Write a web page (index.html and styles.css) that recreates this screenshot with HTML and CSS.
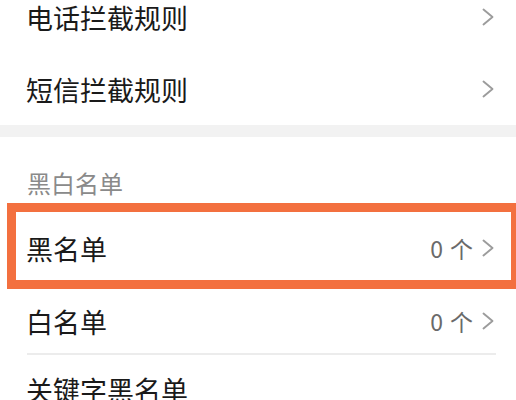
FILE: index.html
```html
<!DOCTYPE html>
<html lang="zh-CN">
<head>
<meta charset="utf-8">
<title>骚扰拦截设置</title>
<link rel="stylesheet" href="styles.css">
</head>
<body>
<div class="page">
  <section class="group group-top">
    <div class="row">
      <span class="label">电话拦截规则</span>
      <span class="trail">
        <svg class="chev" viewBox="0 0 12 18" width="12" height="18"><path d="M1.5 1.5 L10.5 9 L1.5 16.5" /></svg>
      </span>
    </div>
    <div class="row">
      <span class="label">短信拦截规则</span>
      <span class="trail">
        <svg class="chev" viewBox="0 0 12 18" width="12" height="18"><path d="M1.5 1.5 L10.5 9 L1.5 16.5" /></svg>
      </span>
    </div>
  </section>
  <div class="gap"></div>
  <section class="group">
    <div class="header">黑白名单</div>
    <div class="row row-black">
      <span class="label">黑名单</span>
      <span class="trail">
        <span class="count"><span class="num">0</span><span>个</span></span>
        <svg class="chev" viewBox="0 0 12 18" width="12" height="18"><path d="M1.5 1.5 L10.5 9 L1.5 16.5" /></svg>
      </span>
    </div>
    <div class="row row-white">
      <span class="label">白名单</span>
      <span class="trail">
        <span class="count"><span class="num">0</span><span>个</span></span>
        <svg class="chev" viewBox="0 0 12 18" width="12" height="18"><path d="M1.5 1.5 L10.5 9 L1.5 16.5" /></svg>
      </span>
    </div>
    <div class="row row-key">
      <span class="label">关键字黑名单</span>
    </div>
  </section>
  <div class="highlight"></div>
</div>
</body>
</html>
```

FILE: styles.css
```css
html, body {
  margin: 0;
  padding: 0;
  background: #ffffff;
  overflow: hidden;
}

.page {
  position: relative;
  width: 516px;
  height: 400px;
  overflow: hidden;
  font-family: "Noto Sans CJK SC", "Noto Sans", sans-serif;
  color: #1a1a1a;
}

.group {
  background: #ffffff;
}

.group-top {
  margin-top: -19px;
}

.row {
  height: 72px;
  display: flex;
  align-items: center;
  justify-content: space-between;
  padding: 0 22px 0 26px;
  box-sizing: border-box;
}

.label {
  font-size: 27px;
  line-height: 1;
}

.trail {
  display: flex;
  align-items: center;
  gap: 9px;
}

.count {
  display: flex;
  align-items: center;
  gap: 7px;
  font-size: 23px;
  line-height: 1;
  color: #6a6a6a;
}

.chev {
  display: block;
  fill: none;
  stroke: #9c9c9c;
  stroke-width: 1.9;
  stroke-linecap: round;
  stroke-linejoin: round;
}

.gap {
  height: 12px;
  background: #f2f2f2;
}

.header {
  height: 75px;
  box-sizing: border-box;
  padding: 34px 0 0 27px;
  font-size: 24px;
  line-height: 24px;
  color: #8a8a8a;
}

.row-white {
  height: 72px;
  padding-top: 2px;
  position: relative;
}

.row-white::after {
  content: "";
  position: absolute;
  left: 27px;
  right: 20px;
  bottom: 1px;
  height: 2px;
  background: #ececec;
}

.row-key {
  height: 66px;
}

.highlight {
  position: absolute;
  left: 7px;
  top: 203px;
  width: 513px;
  height: 86px;
  box-sizing: border-box;
  border: 9px solid #f3703f;
  pointer-events: none;
}
```
